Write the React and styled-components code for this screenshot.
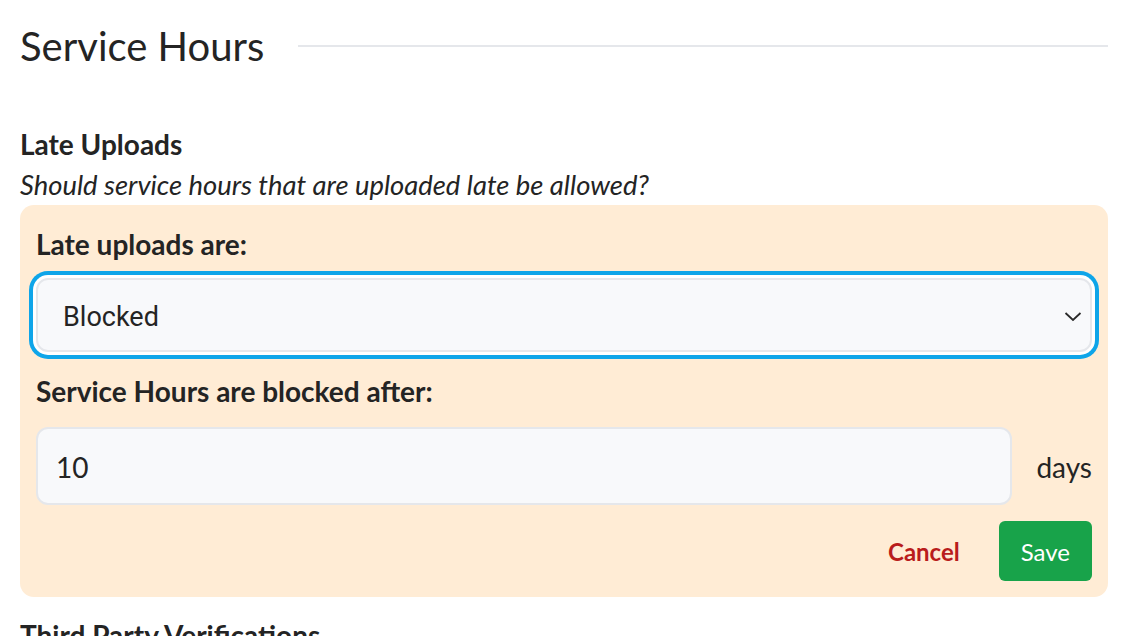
import React, { useState } from "react";
import styled, { createGlobalStyle } from "styled-components";

const GlobalStyle = createGlobalStyle`
  html, body {
    margin: 0;
    padding: 0;
    background: #ffffff;
  }
  body {
    font-family: Lato, "Liberation Sans", sans-serif;
    color: #242424;
  }
  * {
    box-sizing: border-box;
  }
`;

const Page = styled.div`
  padding: 22px 36px 0 20px;
  height: 636px;
  overflow: hidden;
`;

const Header = styled.div`
  display: flex;
  align-items: center;
  gap: 34px;
`;

const Title = styled.h2`
  margin: 0;
  font-size: 40px;
  font-weight: 400;
  line-height: 48px;
  white-space: nowrap;
`;

const Rule = styled.div`
  flex: 1;
  height: 2px;
  background: #e5e7eb;
`;

const Section = styled.section`
  margin-top: ${(p) => p.$top || 0}px;
`;

const SectionTitle = styled.h3`
  margin: 0;
  font-size: 28px;
  font-weight: 700;
  line-height: 40px;
`;

const Hint = styled.p`
  margin: 0;
  font-size: 27.4px;
  font-style: italic;
  line-height: 41px;
`;

const Panel = styled.div`
  margin-top: 0;
  background: #ffecd5;
  border-radius: 14px;
  padding: 19px 16px 16px;
  display: flex;
  flex-direction: column;
`;

const Label = styled.label`
  font-size: 28px;
  font-weight: 700;
  line-height: 40px;
  margin-top: ${(p) => p.$top || 0}px;
`;

const SelectWrap = styled.div`
  position: relative;
  margin-top: 14px;
`;

const Select = styled.select`
  appearance: none;
  -webkit-appearance: none;
  width: 100%;
  height: 74px;
  padding: 4px 60px 0 25px;
  font-family: Roboto, "Noto Sans", sans-serif;
  font-size: 27px;
  color: #242424;
  background: #f8f9fb;
  border: 2px solid #e5e7eb;
  border-radius: 12px;
  outline: none;
  box-shadow: 0 0 0 3px #ffffff, 0 0 0 7px #0ea5e9;
`;

const Chevron = styled.svg`
  position: absolute;
  right: 10px;
  top: 50%;
  transform: translateY(-35%);
  pointer-events: none;
`;

const InputRow = styled.div`
  display: flex;
  align-items: center;
  gap: 24px;
  margin-top: 16px;
`;

const NumberInput = styled.input`
  flex: 1;
  min-width: 0;
  height: 78px;
  padding: 2px 18px 0;
  font-family: Lato, sans-serif;
  font-size: 28px;
  color: #242424;
  background: #f8f9fb;
  border: 2px solid #e5e7eb;
  border-radius: 12px;
  outline: none;
`;

const Unit = styled.span`
  font-size: 28px;
  line-height: 40px;
  padding-top: 2px;
`;

const Actions = styled.div`
  display: flex;
  justify-content: flex-end;
  align-items: center;
  gap: 17px;
  margin-top: 16px;
`;

const Button = styled.button`
  height: 60px;
  padding: 0 22px;
  font-family: Lato, sans-serif;
  font-size: 24px;
  border: none;
  border-radius: 6px;
  cursor: pointer;
  background: ${(p) => (p.$primary ? "#18a34a" : "transparent")};
  color: ${(p) => (p.$primary ? "#ffffff" : "#b91c1c")};
  font-weight: ${(p) => (p.$primary ? 400 : 700)};
`;

export default function App() {
  const [mode, setMode] = useState("blocked");
  const [days, setDays] = useState("10");

  return (
    <Page>
      <GlobalStyle />
      <Header>
        <Title>Service Hours</Title>
        <Rule />
      </Header>

      <Section $top={54}>
        <SectionTitle>Late Uploads</SectionTitle>
        <Hint>Should service hours that are uploaded late be allowed?</Hint>
        <Panel>
          <Label>Late uploads are:</Label>
          <SelectWrap>
            <Select value={mode} onChange={(e) => setMode(e.target.value)}>
              <option value="allowed">Allowed</option>
              <option value="blocked">Blocked</option>
            </Select>
            <Chevron width="18" height="10" viewBox="0 0 18 10" fill="none">
              <path d="M1.5 1.5 L9 8.5 L16.5 1.5" stroke="#2a2a2a" strokeWidth="1.8" />
            </Chevron>
          </SelectWrap>
          <Label $top={19}>Service Hours are blocked after:</Label>
          <InputRow>
            <NumberInput value={days} onChange={(e) => setDays(e.target.value)} />
            <Unit>days</Unit>
          </InputRow>
          <Actions>
            <Button>Cancel</Button>
            <Button $primary>Save</Button>
          </Actions>
        </Panel>
      </Section>

      <Section $top={18}>
        <SectionTitle>Third Party Verifications</SectionTitle>
      </Section>
    </Page>
  );
}
